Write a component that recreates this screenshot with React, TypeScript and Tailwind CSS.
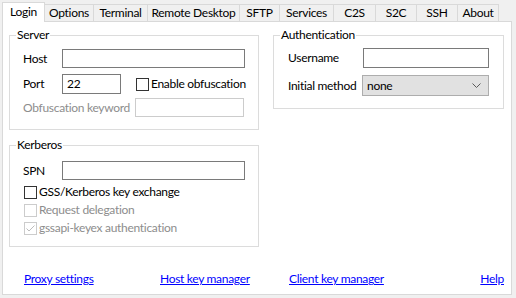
const tabs = [
  { label: 'Login', w: 'w-[43px]' },
  { label: 'Options', w: 'w-[49px]' },
  { label: 'Terminal', w: 'w-[54px]' },
  { label: 'Remote Desktop', w: 'w-[92px]' },
  { label: 'SFTP', w: 'w-[40px]' },
  { label: 'Services', w: 'w-[54px]' },
  { label: 'C2S', w: 'w-[42px]' },
  { label: 'S2C', w: 'w-[41px]' },
  { label: 'SSH', w: 'w-[41px]' },
  { label: 'About', w: 'w-[41px]' },
];

export default function App() {
  return (
    <div
      className="h-[298px] w-[516px] overflow-hidden whitespace-nowrap bg-[#f0f0f0] text-[12px] leading-[16px] tracking-[-0.3px] text-black"
      style={{ fontFamily: '"Segoe UI", Lato, sans-serif' }}
    >
      <div className="ml-[2px] mt-[2px] flex h-[19px] items-end">
        {tabs.map((tab, i) =>
          i === 0 ? (
            <div
              key={tab.label}
              className={`relative z-10 -mb-px flex h-[20px] ${tab.w} justify-center border-x border-t border-[#d9d9d9] bg-white pt-[1px]`}
            >
              {tab.label}
            </div>
          ) : (
            <div
              key={tab.label}
              className={`flex h-[17px] ${tab.w} justify-center border-r border-t border-[#d9d9d9] bg-[#f0f0f0] leading-[16px]`}
            >
              {tab.label}
            </div>
          ),
        )}
      </div>

      <div className="ml-[2px] flex h-[274px] w-[510px] flex-col border border-[#d9d9d9] bg-white">
        <div className="flex gap-[14px] pl-[6px] pt-[13px]">
          <div className="flex w-[250px] flex-col">
            <GroupBox title="Server" className="h-[95px]">
              <div className="mt-[13px] flex h-[19px] items-center pl-[13px]">
                <span className="w-[39px]">Host</span>
                <Input className="w-[183px]" />
              </div>
              <div className="mt-[6px] flex h-[20px] items-center pl-[13px]">
                <span className="w-[39px]">Port</span>
                <Input className="w-[59px]" value="22" />
                <Checkbox className="ml-[15px]" />
                <span className="ml-[2px]">Enable obfuscation</span>
              </div>
              <div className="mt-[4px] flex h-[19px] items-center pl-[13px]">
                <span className="w-[112px] text-[#8d8d8d]">Obfuscation keyword</span>
                <Input className="w-[109px]" disabled />
              </div>
            </GroupBox>

            <GroupBox title="Kerberos" className="mt-[15px] h-[102px]">
              <div className="mt-[15px] flex h-[19px] items-center pl-[13px]">
                <span className="w-[39px]">SPN</span>
                <Input className="w-[183px]" />
              </div>
              <div className="mt-[3px] flex flex-col pl-[14px]">
                <CheckRow label="GSS/Kerberos key exchange" />
                <CheckRow label="Request delegation" disabled />
                <CheckRow label="gssapi-keyex authentication" disabled checked />
              </div>
            </GroupBox>
          </div>

          <GroupBox title="Authentication" className="h-[74px] w-[231px]">
            <div className="mt-[12px] flex h-[20px] items-center pl-[14px]">
              <span className="w-[75px]">Username</span>
              <Input className="w-[126px]" />
            </div>
            <div className="mt-[7px] flex h-[21px] items-center pl-[14px]">
              <span className="w-[74px]">Initial method</span>
              <div className="flex h-[21px] w-[127px] items-center justify-between border border-[#adadad] bg-[#e1e1e1] pl-[4px] pr-[7px]">
                <span>none</span>
                <svg className="h-[5px] w-[9px]" viewBox="0 0 9 5" fill="none" stroke="#5a5a5a" strokeWidth={1}>
                  <path d="M0.5 0.5L4.5 4.5L8.5 0.5" />
                </svg>
              </div>
            </div>
          </GroupBox>
        </div>

        <div className="flex-1" />

        <div className="flex pb-[7px] pl-[21px] pr-[7px] text-[#0000ff]">
          <a href="#" className="w-[136px]">
            <span className="underline">Proxy settings</span>
          </a>
          <a href="#" className="w-[129px]">
            <span className="underline">Host key manager</span>
          </a>
          <a href="#" className="flex-1">
            <span className="underline">Client key manager</span>
          </a>
          <a href="#" className="underline">
            Help
          </a>
        </div>
      </div>
    </div>
  );
}

function GroupBox({ title, className, children }: { title: string; className?: string; children: React.ReactNode }) {
  return (
    <div className={`relative flex flex-col border border-[#dcdcdc] ${className ?? ''}`}>
      <span className="absolute -top-[9px] left-[6px] bg-white px-[1px]">{title}</span>
      {children}
    </div>
  );
}

function Input({ className, value, disabled }: { className?: string; value?: string; disabled?: boolean }) {
  return (
    <div
      className={`flex h-full items-center border bg-white pl-[4px] ${
        disabled ? 'border-[#cccccc]' : 'border-[#7a7a7a]'
      } ${className ?? ''}`}
    >
      {value}
    </div>
  );
}

function Checkbox({ className, disabled, checked }: { className?: string; disabled?: boolean; checked?: boolean }) {
  return (
    <div
      className={`flex h-[13px] w-[13px] shrink-0 items-center justify-center border bg-white ${
        disabled ? 'border-[#cccccc]' : 'border-[#333333]'
      } ${className ?? ''}`}
    >
      {checked && (
        <svg className="h-[9px] w-[9px]" viewBox="0 0 9 9" fill="none" stroke="#bcbcbc" strokeWidth={1}>
          <path d="M0.5 4.5L3 7L8.5 1.5" />
        </svg>
      )}
    </div>
  );
}

function CheckRow({ label, disabled, checked }: { label: string; disabled?: boolean; checked?: boolean }) {
  return (
    <div className="flex h-[18px] items-center">
      <Checkbox disabled={disabled} checked={checked} />
      <span className={`ml-[2px] ${disabled ? 'text-[#8d8d8d]' : ''}`}>{label}</span>
    </div>
  );
}
